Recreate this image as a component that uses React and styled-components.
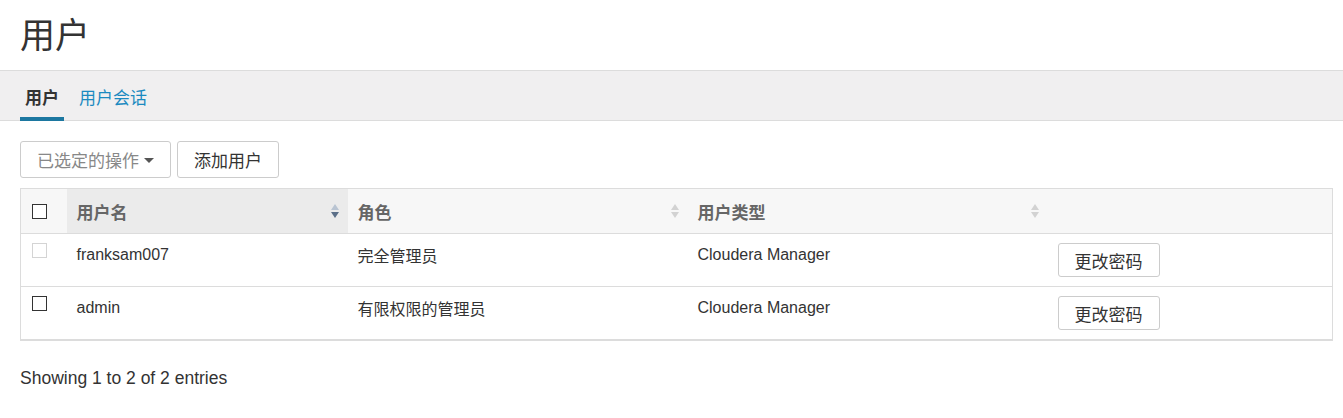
import styled, { createGlobalStyle } from 'styled-components';

const GlobalStyle = createGlobalStyle`
    html, body {
        margin: 0;
        padding: 0;
        background: #fff;
    }
    body {
        font-family: "Liberation Sans", "Noto Sans CJK SC", Arial, sans-serif;
        color: #333;
    }
`;

const Page = styled.div`
    width: 1343px;
`;

const Title = styled.h1`
    margin: 0;
    padding: 12px 20px 0;
    height: 58px;
    font-size: 35px;
    font-weight: 400;
    line-height: 42px;
    color: #333;
    font-family: "Noto Sans CJK SC", sans-serif;
`;

const TabBar = styled.div`
    display: flex;
    align-items: stretch;
    height: 49px;
    padding: 0 20px;
    background: #f0eff0;
    border-top: 1px solid #dcdcdc;
    border-bottom: 1px solid #dcdcdc;
`;

const Tab = styled.div`
    display: flex;
    align-items: center;
    padding: 0 5px;
    margin-right: 10px;
    font-family: "Noto Sans CJK SC", sans-serif;
    font-size: 17px;
    font-weight: ${(p) => (p.$active ? 700 : 400)};
    color: ${(p) => (p.$active ? '#333' : '#1b8ac0')};
    border-bottom: 4px solid ${(p) => (p.$active ? '#1c77a0' : 'transparent')};
    padding-top: 4px;
    margin-bottom: -1px;
`;

const Content = styled.div`
    padding: 20px 20px 0;
`;

const Toolbar = styled.div`
    display: flex;
    gap: 6px;
    margin-bottom: 10px;
`;

const Button = styled.button`
    display: inline-flex;
    align-items: center;
    gap: 5px;
    height: ${(p) => (p.$small ? '34px' : '37px')};
    padding: 0 16px;
    background: #fff;
    border: 1px solid #ccc;
    border-radius: 3px;
    font-family: "Noto Sans CJK SC", sans-serif;
    font-size: 17px;
    color: ${(p) => (p.$muted ? '#888' : '#333')};
    cursor: pointer;
`;

const Caret = styled.span`
    display: inline-block;
    width: 0;
    height: 0;
    border-left: 5px solid transparent;
    border-right: 5px solid transparent;
    border-top: 5px solid #555;
    margin-top: 1px;
`;

const Table = styled.table`
    width: 1312px;
    border-collapse: collapse;
    table-layout: fixed;
    border: 1px solid #dcdcdc;
    border-bottom-width: 2px;
`;

const Th = styled.th`
    position: relative;
    height: 44px;
    padding: 0 10px;
    text-align: left;
    vertical-align: middle;
    background: ${(p) => (p.$sorted ? '#ebebeb' : '#f7f7f7')};
    border-bottom: 1px solid #dcdcdc;
    font-family: "Noto Sans CJK SC", sans-serif;
    font-size: 17px;
    font-weight: 700;
    color: #666;
`;

const Td = styled.td`
    height: 52px;
    padding: 9px 10px;
    box-sizing: border-box;
    vertical-align: top;
    border-bottom: 1px solid #dcdcdc;
    font-size: 16px;
    line-height: 24px;
    color: #333;
    font-family: ${(p) => (p.$cjk ? '"Noto Sans CJK SC", sans-serif' : '"Liberation Sans", Arial, sans-serif')};
`;

const CheckCell = styled.div`
    display: flex;
    padding-left: 1px;
`;

const Checkbox = styled.span`
    display: inline-block;
    width: 13px;
    height: 13px;
    background: #fff;
    border: 1px solid ${(p) => (p.$disabled ? '#d4d4d4' : '#333')};
`;

const SortIcon = styled.svg`
    position: absolute;
    right: 9px;
    top: 50%;
    margin-top: -7px;
`;

const Info = styled.div`
    padding-top: 27px;
    font-size: 17.5px;
    color: #333;
`;

function Sort({ dir }) {
    const up = dir === 'desc' ? '#b9c4d2' : '#d2d2d2';
    const down = dir === 'desc' ? '#5b6f88' : '#d2d2d2';
    return (
        <SortIcon width="8" height="14" viewBox="0 0 8 14">
            <path d="M4 0 L8 6 L0 6 Z" fill={up} />
            <path d="M0 8 L8 8 L4 14 Z" fill={down} />
        </SortIcon>
    );
}

const users = [
    { name: 'franksam007', role: '完全管理员', type: 'Cloudera Manager', disabled: true },
    { name: 'admin', role: '有限权限的管理员', type: 'Cloudera Manager', disabled: false },
];

export default function App() {
    return (
        <Page>
            <GlobalStyle />
            <Title>用户</Title>
            <TabBar>
                <Tab $active>用户</Tab>
                <Tab>用户会话</Tab>
            </TabBar>
            <Content>
                <Toolbar>
                    <Button $muted>
                        已选定的操作
                        <Caret />
                    </Button>
                    <Button>添加用户</Button>
                </Toolbar>
                <Table>
                    <colgroup>
                        <col style={{ width: 46 }} />
                        <col style={{ width: 281 }} />
                        <col style={{ width: 340 }} />
                        <col style={{ width: 360 }} />
                        <col style={{ width: 285 }} />
                    </colgroup>
                    <thead>
                        <tr>
                            <Th>
                                <CheckCell>
                                    <Checkbox />
                                </CheckCell>
                            </Th>
                            <Th $sorted>
                                用户名
                                <Sort dir="desc" />
                            </Th>
                            <Th>
                                角色
                                <Sort />
                            </Th>
                            <Th>
                                用户类型
                                <Sort />
                            </Th>
                            <Th />
                        </tr>
                    </thead>
                    <tbody>
                        {users.map((u) => (
                            <tr key={u.name}>
                                <Td>
                                    <CheckCell>
                                        <Checkbox $disabled={u.disabled} />
                                    </CheckCell>
                                </Td>
                                <Td>{u.name}</Td>
                                <Td $cjk>{u.role}</Td>
                                <Td>{u.type}</Td>
                                <Td>
                                    <Button $small>更改密码</Button>
                                </Td>
                            </tr>
                        ))}
                    </tbody>
                </Table>
                <Info>Showing 1 to 2 of 2 entries</Info>
            </Content>
        </Page>
    );
}
